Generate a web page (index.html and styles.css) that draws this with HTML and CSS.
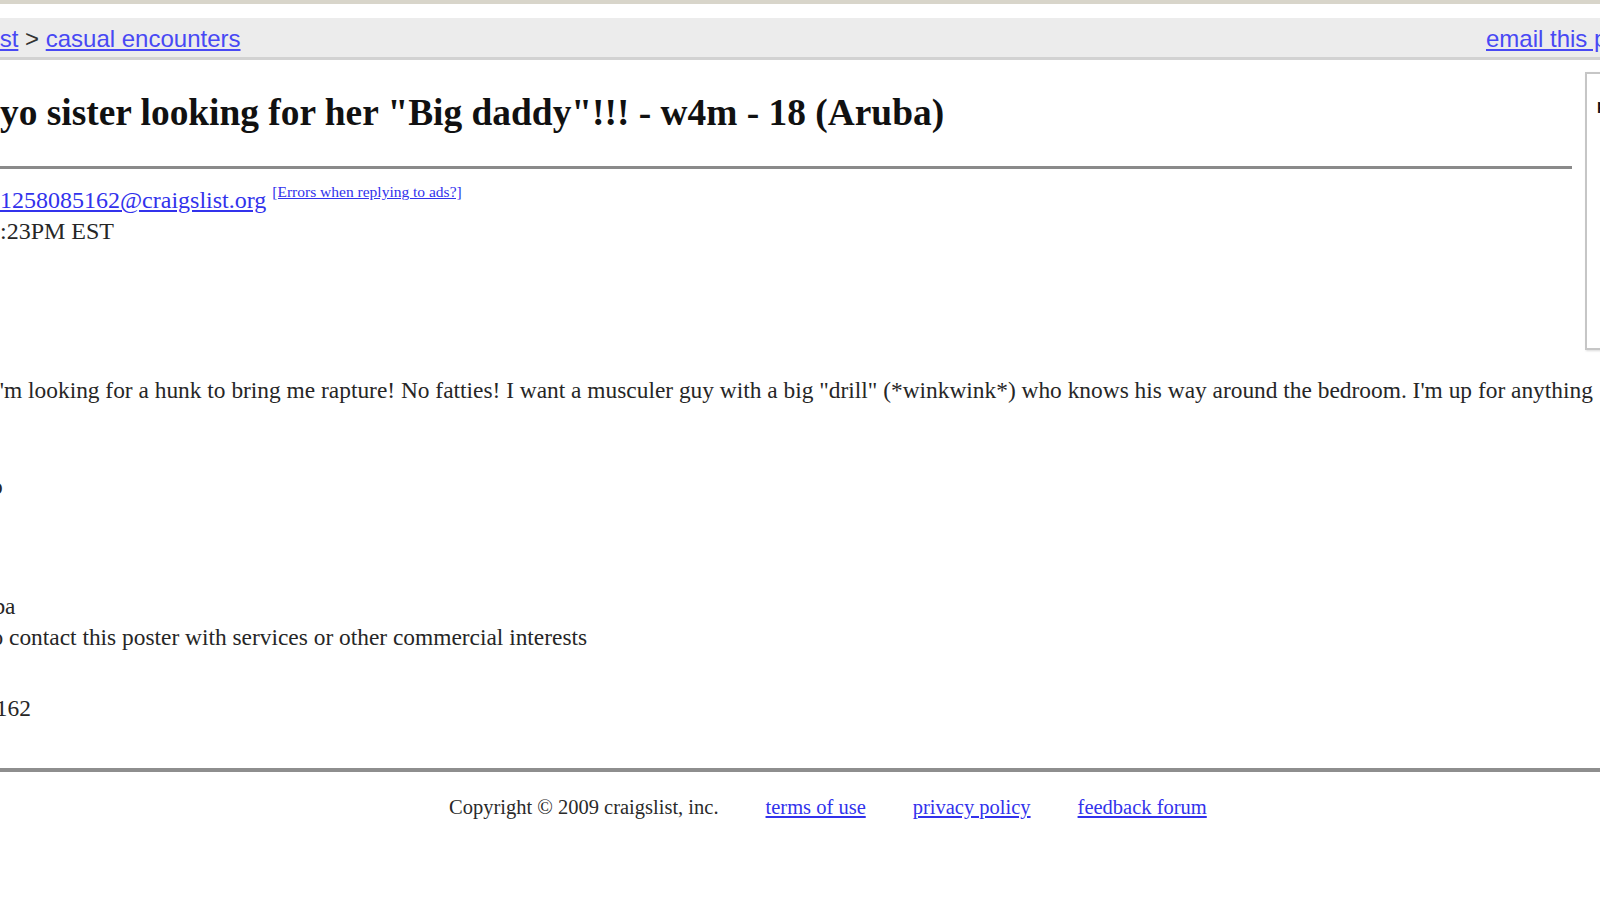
FILE: index.html
```html
<!DOCTYPE html>
<html>
<head>
    <title>yo sister looking for her "Big daddy"!!! - w4m - 18 (Aruba)</title>
    <link rel="stylesheet" href="styles.css">
</head>
<body>
    <div class="topline"></div>
    <div class="bar">
        <div class="crumbs"><a href="#">craigslist</a> &gt; <a href="#">casual encounters</a></div>
        <div class="email"><a href="#">email this posting to a friend</a></div>
    </div>
    <div class="page">
        <div class="flagbox">
            <b>please flag with care:</b>
        </div>
        <h2 class="title">yo sister looking for her "Big daddy"!!! - w4m - 18 (Aruba)</h2>
        <hr class="rule">
        <div class="meta">
            <div class="reply"><a href="#">1258085162@craigslist.org</a> <sup><a href="#">[Errors when replying to ads?]</a></sup></div>
            <div class="date">:23PM EST</div>
        </div>
        <div class="userbody">
            <p class="text">I'm looking for a hunk to bring me rapture! No fatties! I want a musculer guy with a big "drill" (*winkwink*) who knows his way around the bedroom. I'm up for anything</p>
            <p class="sign">xoxo</p>
            <ul class="info">
                <li class="loc">Aruba</li>
                <li class="notok">to contact this poster with services or other commercial interests</li>
            </ul>
        </div>
        <div class="postid">1258085162</div>
    </div>
    <hr class="footrule">
    <div class="footer">
        <span>Copyright &copy; 2009 craigslist, inc.</span>
        <a href="#">terms of use</a>
        <a href="#">privacy policy</a>
        <a href="#">feedback forum</a>
    </div>
</body>
</html>
```

FILE: styles.css
```css
html, body {
    margin: 0;
    overflow: hidden;
}
body {
    width: 1600px;
    height: 900px;
    background-color: #fff;
    color: #262626;
    font-family: "Liberation Serif", "Times New Roman", serif;
}
a {
    color: #3232ec;
}
.topline {
    height: 4px;
    background-color: #d8d5ca;
    margin-bottom: 14px;
}
.bar {
    display: grid;
    grid-template-columns: 1fr 114px;
    height: 39px;
    line-height: 41px;
    background-color: #ececec;
    border-bottom: 3px solid #d2d2d2;
    font-family: "Liberation Sans", Arial, sans-serif;
    font-size: 24px;
    color: #333;
    white-space: nowrap;
}
.bar a {
    color: #4848f4;
}
.crumbs {
    text-indent: -75px;
}
.page {
    display: flow-root;
    width: 1800px;
}
.flagbox {
    float: right;
    width: 215px;
    height: 278px;
    margin-top: 12px;
    padding: 22px 0 0 10px;
    border: 2px solid #c6c6c6;
    border-right: none;
    box-sizing: border-box;
    box-shadow: 1px 1px 2px rgba(0, 0, 0, 0.15);
    font-family: "Liberation Sans", Arial, sans-serif;
    font-size: 15px;
    color: #111;
}
.title {
    margin: 30px 0 0 0;
    font-size: 37.4px;
    line-height: 46px;
    font-weight: bold;
    color: #111;
    white-space: nowrap;
}
.rule {
    width: 1572px;
    margin: 30px 0 0 0;
    border: none;
    height: 3px;
    background-color: #8a8a8a;
}
.meta {
    margin-top: 16px;
    font-size: 24px;
    line-height: 31px;
}
.reply sup {
    font-size: 15.5px;
    vertical-align: 11px;
    line-height: 0;
}
.userbody {
    margin-top: 128px;
    font-size: 23.4px;
    line-height: 31px;
}
.text {
    margin: 0;
    white-space: nowrap;
    text-indent: -8px;
}
.sign {
    margin: 65px 0 0 0;
    text-indent: -44px;
}
.info {
    margin: 89px 0 0 0;
    padding: 0;
    list-style: none;
}
.loc {
    text-indent: -43px;
}
.notok {
    text-indent: -15px;
}
.postid {
    margin-top: 40px;
    font-size: 23.4px;
    line-height: 31px;
    text-indent: -86px;
}
.footrule {
    margin: 44px 0 0 0;
    border: none;
    height: 4px;
    background-color: #8e8e8e;
}
.footer {
    display: flex;
    gap: 47px;
    padding: 20px 0 0 449px;
    font-size: 20.5px;
    line-height: 30px;
    color: #2a2a2a;
}
```
